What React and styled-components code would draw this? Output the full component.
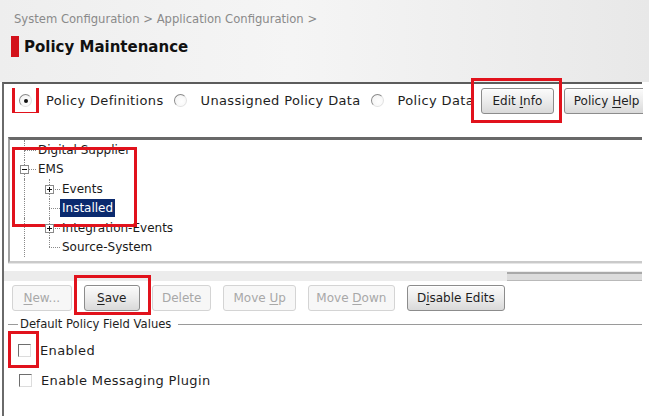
import React from "react";
import styled, { createGlobalStyle } from "styled-components";

const GlobalStyle = createGlobalStyle`
  html, body {
    margin: 0;
    padding: 0;
    background: #ffffff;
  }
  body {
    font-family: "DejaVu Sans", Verdana, sans-serif;
    font-size: 12px;
    color: #1a1a1a;
  }
`;

const Page = styled.div`
  width: 649px;
  height: 416px;
  overflow: hidden;
  background: #ffffff;
`;

const Header = styled.header`
  height: 82px;
  box-sizing: border-box;
  padding: 12px 0 0 14px;
  background: linear-gradient(to right, #eeeeee, #f5f5f5 45%, #e8e8e8);
`;

const Breadcrumb = styled.div`
  color: #8a8a8a;
  font-size: 11.6px;
  line-height: 14px;
  white-space: nowrap;
`;

const TitleRow = styled.div`
  display: flex;
  align-items: center;
  gap: 5px;
  margin: 10px 0 0 -3px;
`;

const TitleMark = styled.span`
  width: 8px;
  height: 21px;
  background: #d3121b;
`;

const Title = styled.h1`
  margin: 0;
  font-size: 15px;
  font-weight: bold;
  color: #111111;
`;

const Panel = styled.main`
  margin-left: 2px;
  width: 640px;
  height: 334px;
  box-sizing: border-box;
  border-top: 2px solid #5c5c5c;
  border-left: 2px solid #6a6a6a;
  background: #ffffff;
`;

const ModeBar = styled.div`
  display: flex;
  align-items: flex-start;
  height: 53px;
  padding-top: 4px;
  box-sizing: border-box;
`;

const RadioGroup = styled.div`
  flex: none;
  width: 468px;
  height: 25px;
  display: flex;
  align-items: center;
  padding-left: 15px;
  box-sizing: border-box;
  overflow: hidden;
  white-space: nowrap;
`;

const RadioOption = styled.label`
  display: flex;
  align-items: center;
  gap: 14px;
  margin-right: 10px;
  font-size: 13px;
  letter-spacing: 0.35px;
  color: #1e1e1e;
`;

const RadioDot = styled.span`
  position: relative;
  flex: none;
  width: 11px;
  height: 11px;
  border-radius: 50%;
  border: 1px solid;
  border-color: #8a8a8a #e2e2e2 #e2e2e2 #8a8a8a;
  background: radial-gradient(circle at 60% 60%, #ffffff, #f1f1f1);
  &::after {
    content: "";
    display: ${(p) => (p.$checked ? "block" : "none")};
    position: absolute;
    left: 3.5px;
    top: 3.5px;
    width: 4px;
    height: 4px;
    border-radius: 50%;
    background: #111111;
  }
`;

const Callout = styled.span`
  position: absolute;
  inset: ${(p) => p.$inset};
  border: 3px solid #e1121c;
  pointer-events: none;
`;

const Marked = styled.span`
  position: relative;
  display: inline-flex;
  flex: none;
`;

const Button = styled.button`
  flex: none;
  height: 26px;
  padding: 0 ${(p) => p.$pad || 9}px;
  font-family: "DejaVu Sans", Verdana, sans-serif;
  font-size: 12px;
  color: #1e1e1e;
  border: 1px solid #8c8c8c;
  border-radius: 3px;
  background: linear-gradient(#fbfbfb, #ececec 50%, #d9d9d9);
  box-shadow: inset 0 1px 0 #ffffff;
  white-space: nowrap;
  &:disabled {
    color: #a8a8a8;
    border-color: #d4d4d4;
    background: #f7f7f7;
    box-shadow: none;
  }
  u {
    text-underline-offset: 2px;
  }
`;

const HeaderButtons = styled.div`
  display: flex;
  gap: 10px;
  margin-left: 9px;
`;

const ClipBox = styled.div`
  flex: none;
  width: 79px;
  overflow: hidden;
`;

const TreeFrame = styled.div`
  margin-left: 4px;
  border-top: 3px solid #686868;
  border-left: 2px solid #a2a2a2;
  border-bottom: 2px solid #cacaca;
  box-shadow: 0 1px 0 #e6e6e6;
`;

const TreeBody = styled.ul`
  position: relative;
  list-style: none;
  margin: 0;
  padding: 0;
  height: 121px;
  overflow: hidden;
`;

const TreeRow = styled.li`
  display: flex;
  align-items: center;
  height: 19.5px;
`;

const Gutter = styled.span`
  position: relative;
  flex: none;
  align-self: stretch;
  width: ${(p) => p.$width}px;
  &::before {
    content: "";
    display: ${(p) => (p.$line ? "block" : "none")};
    position: absolute;
    left: ${(p) => p.$center}px;
    top: 0;
    bottom: ${(p) => (p.$last ? "50%" : "0")};
    border-left: 1px dotted #8a8a8a;
  }
  &::after {
    content: "";
    display: ${(p) => (p.$branch ? "block" : "none")};
    position: absolute;
    left: ${(p) => p.$center}px;
    right: 0;
    top: 50%;
    border-top: 1px dotted #8a8a8a;
  }
`;

const Expander = styled.span`
  position: absolute;
  z-index: 1;
  left: ${(p) => p.$center - 4}px;
  top: calc(50% - 4px);
  width: 9px;
  height: 9px;
  box-sizing: border-box;
  border: 1px solid #8a8a8a;
  background: #ffffff;
  display: flex;
  svg {
    display: block;
  }
`;

const NodeLabel = styled.span`
  height: 18px;
  line-height: 18px;
  padding: 0 2px;
  white-space: nowrap;
  color: ${(p) => (p.$selected ? "#ffffff" : "#1a1a1a")};
  background: ${(p) => (p.$selected ? "#0b2a6e" : "transparent")};
`;

const ScrollStrip = styled.div`
  margin-top: 8px;
  height: 10px;
  background: #ececec;
  display: flex;
  justify-content: flex-end;
`;

const ScrollThumb = styled.div`
  width: 135px;
  height: 6px;
  margin-top: 1px;
  border-top: 2px solid #a9a9a9;
  border-bottom: 1px solid #b9b9b9;
  background: #dcdcdc;
`;

const ActionBar = styled.div`
  display: flex;
  gap: 12px;
  margin-top: 4px;
  padding-left: 8px;
`;

const GroupHeader = styled.div`
  display: flex;
  align-items: center;
  margin: 6px 0 0 4px;
  line-height: 14px;
  font-size: 11.6px;
  color: #1e1e1e;
  &::before,
  &::after {
    content: "";
    border-top: 1px solid #9a9a9a;
  }
  &::before {
    width: 10px;
  }
  &::after {
    flex: 1;
  }
  span {
    padding: 0 7px 0 2px;
  }
`;

const CheckRow = styled.label`
  display: flex;
  align-items: center;
  gap: 9px;
  height: 30px;
  padding-left: ${(p) => p.$indent || 14}px;
  font-size: 13px;
  letter-spacing: 0.35px;
  color: #1e1e1e;
`;

const CheckFirst = styled.div`
  margin-top: 4px;
`;

const CheckBox = styled.span`
  flex: none;
  width: 13px;
  height: 13px;
  box-sizing: border-box;
  border: 1px solid;
  border-color: #6e6e6e #dcdcdc #dcdcdc #6e6e6e;
  background: #ffffff;
`;

function Mnemonic({ text, at }) {
  if (at == null) return text;
  return (
    <>
      {text.slice(0, at)}
      <u>{text[at]}</u>
      {text.slice(at + 1)}
    </>
  );
}

const PlusMinus = ({ open }) => (
  <svg width="7" height="7" viewBox="0 0 7 7">
    <path d="M1 3.5h5" stroke="#111" strokeWidth="1" />
    {!open && <path d="M3.5 1v5" stroke="#111" strokeWidth="1" />}
  </svg>
);

const treeRows = [
  { label: "Digital Supplier", level: 0 },
  { label: "EMS", level: 0, expander: "open" },
  { label: "Events", level: 1, expander: "closed" },
  { label: "Installed", level: 1, selected: true },
  { label: "Integration-Events", level: 1, expander: "closed" },
  { label: "Source-System", level: 1, last: true },
];

const gutters = [
  { width: 26, center: 14 },
  { width: 24, center: 13 },
];

function TreeNode({ row }) {
  return (
    <TreeRow>
      <Gutter
        $width={gutters[0].width}
        $center={gutters[0].center}
        $line
        $branch={row.level === 0}
      >
        {row.level === 0 && row.expander && (
          <Expander $center={gutters[0].center}>
            <PlusMinus open={row.expander === "open"} />
          </Expander>
        )}
      </Gutter>
      {row.level === 1 && (
        <Gutter
          $width={gutters[1].width}
          $center={gutters[1].center}
          $line
          $last={row.last}
          $branch
        >
          {row.expander && (
            <Expander $center={gutters[1].center}>
              <PlusMinus open={row.expander === "open"} />
            </Expander>
          )}
        </Gutter>
      )}
      <NodeLabel $selected={row.selected}>{row.label}</NodeLabel>
    </TreeRow>
  );
}

const actions = [
  { text: "New...", at: 0, disabled: true, pad: 10.5 },
  { text: "Save", at: 0, marked: true, pad: 12.5 },
  { text: "Delete", disabled: true, pad: 9 },
  { text: "Move Up", at: 5, disabled: true, pad: 9 },
  { text: "Move Down", at: 5, disabled: true, pad: 7.5 },
  { text: "Disable Edits", at: 1, pad: 9 },
];

export default function App() {
  return (
    <Page>
      <GlobalStyle />
      <Header>
        <Breadcrumb>System Configuration &gt; Application Configuration &gt;</Breadcrumb>
        <TitleRow>
          <TitleMark />
          <Title>Policy Maintenance</Title>
        </TitleRow>
      </Header>

      <Panel>
        <ModeBar>
          <RadioGroup>
            <RadioOption>
              <Marked>
                <RadioDot $checked />
                <Callout $inset="-12px -7px -8px -7px" />
              </Marked>
              Policy Definitions
            </RadioOption>
            <RadioOption>
              <RadioDot />
              Unassigned Policy Data
            </RadioOption>
            <RadioOption>
              <RadioDot />
              Policy Data
            </RadioOption>
          </RadioGroup>
          <HeaderButtons>
            <Marked>
              <Button $pad={10.5}>
                <Mnemonic text="Edit Info" at={5} />
              </Button>
              <Callout $inset="-10px -8px -9px -10px" />
            </Marked>
            <ClipBox>
              <Button $pad={9}>
                <Mnemonic text="Policy Help" at={7} />
              </Button>
            </ClipBox>
          </HeaderButtons>
        </ModeBar>

        <TreeFrame>
          <TreeBody>
            {treeRows.map((row) => (
              <TreeNode key={row.label} row={row} />
            ))}
            <Callout $inset="7px auto auto 2px" style={{ width: 119, height: 74 }} />
          </TreeBody>
        </TreeFrame>
        <ScrollStrip>
          <ScrollThumb />
        </ScrollStrip>

        <ActionBar>
          {actions.map((a) =>
            a.marked ? (
              <Marked key={a.text}>
                <Button $pad={a.pad}>
                  <Mnemonic text={a.text} at={a.at} />
                </Button>
                <Callout $inset="-10px -11px -4px -10px" />
              </Marked>
            ) : (
              <Button key={a.text} disabled={a.disabled} $pad={a.pad}>
                <Mnemonic text={a.text} at={a.at} />
              </Button>
            )
          )}
        </ActionBar>

        <GroupHeader>
          <span>Default Policy Field Values</span>
        </GroupHeader>
        <CheckFirst>
          <CheckRow>
            <Marked>
              <CheckBox />
              <Callout $inset="-13px -8px -11px -10px" />
            </Marked>
            Enabled
          </CheckRow>
        </CheckFirst>
        <CheckRow $indent={15}>
          <CheckBox />
          Enable Messaging Plugin
        </CheckRow>
      </Panel>
    </Page>
  );
}
